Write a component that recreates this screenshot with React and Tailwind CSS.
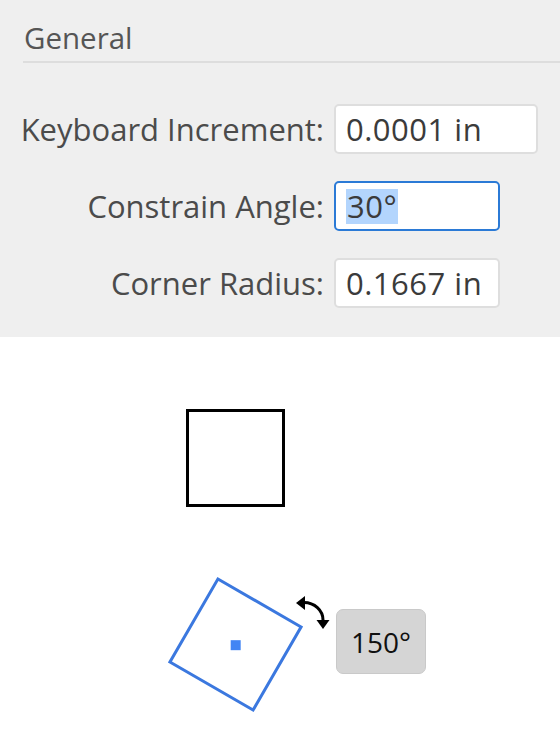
const fields = [
  { label: "Keyboard Increment:", value: "0.0001 in", width: "w-[204px]" },
  { label: "Constrain Angle:", value: "30°", width: "w-[166px]", focused: true },
  { label: "Corner Radius:", value: "0.1667 in", width: "w-[166px]" },
];

function Field({ label, value, width, focused }) {
  return (
    <>
      <div className="text-right text-[31px] text-[#4b4b4b] leading-[50px] h-[50px] whitespace-nowrap">{label}</div>
      <div
        className={`${width} h-[50px] bg-white rounded-[5px] border-2 pl-[10px] flex items-center text-[31px] tracking-[0.5px] text-[#3b3b3b] ${
          focused ? "border-[#2b7ad6]" : "border-[#dedede]"
        }`}
      >
        {focused ? (
          <span className="inline-block h-[35px] leading-[35px] px-[1px] bg-[#b3d5fd]">{value}</span>
        ) : (
          <span className="leading-[46px]">{value}</span>
        )}
      </div>
    </>
  );
}

function RotateArrow() {
  return (
    <svg width="40" height="40" viewBox="0 0 40 40" className="block">
      <path d="M12 10.5 A19 17.5 0 0 1 31 28" fill="none" stroke="#000" strokeWidth="3" />
      <polygon points="4,11 13,4 13,18" fill="#000" />
      <polygon points="24.5,28 37.5,28 31,37" fill="#000" />
    </svg>
  );
}

export default function App() {
  return (
    <div className="w-[560px] h-[756px] bg-white flex flex-col font-['Open_Sans',sans-serif] overflow-hidden">
      <section className="bg-[#efefef] h-[337px] pt-[20px]">
        <h2 className="pl-[24px] text-[29.5px] leading-[36px] text-[#555555]">General</h2>
        <div className="ml-[23px] mt-[5px] h-[2px] bg-[#dddddd]" />
        <div className="mt-[41px] grid grid-cols-[324px_auto] gap-x-[10px] gap-y-[27px] items-center justify-start">
          {fields.map((f) => (
            <Field key={f.label} {...f} />
          ))}
        </div>
      </section>

      <section className="flex-1 bg-white pt-[72px]">
        <div className="ml-[186px] w-[99px] h-[98px] border-[3px] border-black" />
        <div className="mt-[87px] ml-[186px] flex items-start">
          <div className="mt-[1px] w-[99px] h-[99px] rotate-[30deg] border-[3px] border-[#3b78df] flex items-center justify-center">
            <div className="w-[10px] h-[10px] bg-[#4285f4] rotate-[-30deg]" />
          </div>
          <div className="ml-[7px] -mt-[2px]">
            <RotateArrow />
          </div>
          <div className="ml-[4px] mt-[15px] w-[90px] h-[65px] rounded-[7px] bg-[#d5d5d5] border border-[#c9c9c9] flex items-center justify-center text-[28px] text-[#111111]">
            150°
          </div>
        </div>
      </section>
    </div>
  );
}
